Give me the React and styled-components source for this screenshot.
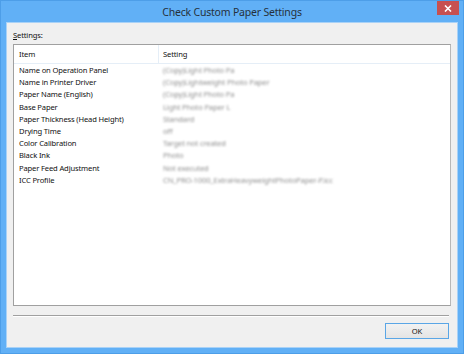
import styled, { createGlobalStyle } from 'styled-components';

const GlobalStyle = createGlobalStyle`
  html, body {
    margin: 0;
    padding: 0;
    width: 464px;
    height: 354px;
    overflow: hidden;
  }
  body {
    font-family: "Noto Sans", "Open Sans", sans-serif;
  }
`;

const Window = styled.div`
  width: 464px;
  height: 354px;
  box-sizing: border-box;
  background: #61b0f6;
  border: 1px solid #4d9ee8;
  display: flex;
  flex-direction: column;
`;

const TitleBar = styled.div`
  height: 21px;
  position: relative;
  display: flex;
  align-items: center;
  justify-content: center;
  font-size: 10.5px;
  letter-spacing: -0.2px;
  color: #26303c;
  padding-top: 1px;
  box-sizing: border-box;
`;

const CloseButton = styled.div`
  position: absolute;
  right: 4px;
  top: 0;
  width: 22px;
  height: 14px;
  background: #c75050;
  display: flex;
  align-items: center;
  justify-content: center;
`;

const Client = styled.div`
  flex: 1;
  margin: 0 5px 5px 5px;
  background: #f0f0f0;
  border: 1px solid #a9d2f7;
  display: flex;
  flex-direction: column;
  padding: 5px 6px 0 6px;
  font-size: 7.6px;
  letter-spacing: -0.15px;
  color: #111;
`;

const Label = styled.div`
  height: 14px;
  line-height: 14px;
  margin-bottom: 2px;
  u { text-decoration: underline; }
`;

const ListBox = styled.div`
  height: 262px;
  box-sizing: border-box;
  border: 1px solid #a0a0a0;
  border-right-color: #b8b8b8;
  background: #fff;
  display: flex;
  flex-direction: column;
`;

const HeaderRow = styled.div`
  display: grid;
  grid-template-columns: 145px 1fr;
  height: 18px;
  border-bottom: 1px solid #e5eef7;
`;

const HeaderCell = styled.div`
  padding-left: ${p => (p.$first ? '5px' : '4px')};
  line-height: 18px;
  border-right: ${p => (p.$first ? '1px solid #e5eef7' : 'none')};
`;

const Row = styled.div`
  display: grid;
  grid-template-columns: 145px 1fr;
  height: 12.2px;
  line-height: 12px;
  white-space: nowrap;
`;

const ItemCell = styled.div`
  padding-left: 5px;
`;

const ValueCell = styled.div`
  padding-left: 4px;
  color: #909090;
  filter: blur(0.9px);
`;

const Separator = styled.div`
  margin-top: 9px;
  height: 0;
  border-top: 1px solid #a0a0a0;
  border-bottom: 1px solid #fff;
  margin-right: 2px;
`;

const Footer = styled.div`
  display: flex;
  justify-content: flex-end;
  padding-top: 6px;
  padding-right: 2px;
`;

const Button = styled.button`
  width: 64px;
  height: 16px;
  box-sizing: border-box;
  border: 1px solid #5aa6e6;
  background: linear-gradient(#f2f2f2, #e4e4e4);
  font-family: "Noto Sans", "Open Sans", sans-serif;
  font-size: 7.6px;
  color: #111;
  padding: 0;
  line-height: 14px;
`;

const rows = [
  ['Name on Operation Panel', '(Copy)Light Photo Pa'],
  ['Name in Printer Driver', '(Copy)Lightweight Photo Paper'],
  ['Paper Name (English)', '(Copy)Light Photo Pa'],
  ['Base Paper', 'Light Photo Paper L'],
  ['Paper Thickness (Head Height)', 'Standard'],
  ['Drying Time', 'off'],
  ['Color Calibration', 'Target not created'],
  ['Black Ink', 'Photo'],
  ['Paper Feed Adjustment', 'Not executed'],
  ['ICC Profile', 'CN_PRO-1000_ExtraHeavyweightPhotoPaper-P.icc'],
];

export default function App() {
  return (
    <>
      <GlobalStyle />
      <Window>
        <TitleBar>
          Check Custom Paper Settings
          <CloseButton>
            <svg width="8" height="7" viewBox="0 0 8 7">
              <path d="M1 0.5 L7 6.5 M7 0.5 L1 6.5" stroke="#fff" strokeWidth="1.6" />
            </svg>
          </CloseButton>
        </TitleBar>
        <Client>
          <Label><u>S</u>ettings:</Label>
          <ListBox>
            <HeaderRow>
              <HeaderCell $first>Item</HeaderCell>
              <HeaderCell>Setting</HeaderCell>
            </HeaderRow>
            {rows.map(([item, value]) => (
              <Row key={item}>
                <ItemCell>{item}</ItemCell>
                <ValueCell>{value}</ValueCell>
              </Row>
            ))}
          </ListBox>
          <Separator />
          <Footer>
            <Button>OK</Button>
          </Footer>
        </Client>
      </Window>
    </>
  );
}
